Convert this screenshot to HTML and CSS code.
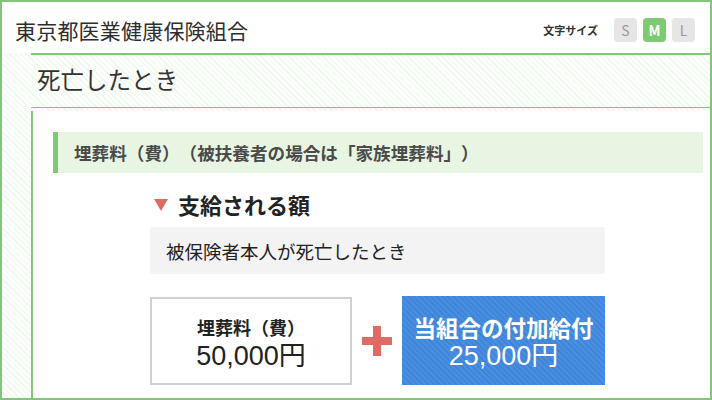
FILE: index.html
```html
<!DOCTYPE html>
<html lang="ja">
<head>
    <meta charset="UTF-8">
    <meta name="viewport" content="width=device-width, initial-scale=1.0">
    <title>死亡したとき</title>
    <link rel="stylesheet" href="styles.css">
</head>
<body>
    <div class="frame">
        <header class="site-header">
            <div class="site-title">東京都医業健康保険組合</div>
            <div class="font-size">
                <span class="font-size-label">文字サイズ</span>
                <span class="size-btn">S</span>
                <span class="size-btn active">M</span>
                <span class="size-btn">L</span>
            </div>
        </header>

        <div class="main">
            <h1 class="page-title">死亡したとき</h1>

            <div class="content">
                <h2 class="section-title">埋葬料（費）（被扶養者の場合は「家族埋葬料」）</h2>

                <div class="benefit">
                    <h3 class="benefit-title"><span class="tri"></span>支給される額</h3>
                    <div class="condition">被保険者本人が死亡したとき</div>

                    <div class="amounts">
                        <div class="amount-box">
                            <div class="amount-name">埋葬料（費）</div>
                            <div class="amount-value">50,000円</div>
                        </div>
                        <div class="plus"></div>
                        <div class="amount-box extra">
                            <div class="amount-name">当組合の付加給付</div>
                            <div class="amount-value">25,000円</div>
                        </div>
                    </div>
                </div>
            </div>
        </div>
    </div>
</body>
</html>
```

FILE: styles.css
```css
* {
    box-sizing: border-box;
}
body {
    margin: 0;
    padding: 0;
    font-family: "Noto Sans CJK JP", "Noto Sans", sans-serif;
    color: #333;
    background-color: #fff;
    text-spacing-trim: space-all;
}
.frame {
    width: 712px;
    height: 400px;
    border: 2px solid #80c77a;
    overflow: hidden;
    display: flex;
    flex-direction: column;
    background: repeating-linear-gradient(45deg, #eef7ec 0 1px, #fcfefb 1px 4px);
}

/* header */
.site-header {
    height: 51px;
    flex: none;
    background-color: #fff;
    display: flex;
    align-items: center;
    justify-content: space-between;
    padding: 5px 15px 0 13px;
}
.site-title {
    font-size: 21px;
    color: #2e2e2e;
    letter-spacing: 0.2px;
}
.font-size {
    display: flex;
    align-items: center;
    gap: 6px;
}
.font-size-label {
    font-size: 11px;
    font-weight: bold;
    color: #333;
    margin-right: 10px;
}
.size-btn {
    width: 23px;
    height: 24px;
    border-radius: 4px;
    background-color: #e6e6e6;
    color: #9a9a9a;
    font-size: 14px;
    line-height: 24px;
    text-align: center;
}
.size-btn.active {
    background-color: #7ccb72;
    color: #fff;
    font-weight: bold;
}

/* main column */
.main {
    flex: 1;
    margin-left: 29px;
    border-top: 2px solid #80c77a;
    display: flex;
    flex-direction: column;
}
.page-title {
    margin: 0;
    height: 53px;
    flex: none;
    display: flex;
    align-items: center;
    padding: 0 0 4px 6px;
    font-size: 23.5px;
    font-weight: normal;
    color: #333;
    border-bottom: 1px solid #80c77a;
}
.content {
    flex: 1;
    margin-top: 3px;
    border-left: 2px solid #80c77a;
    background-color: #fff;
    padding: 21px 7px 0 20px;
}
.section-title {
    margin: 0;
    height: 41px;
    display: flex;
    align-items: center;
    padding-left: 16px;
    border-left: 5px solid #7ccb72;
    background-color: #e8f5e3;
    font-size: 17.6px;
    font-weight: bold;
    color: #4a4a4a;
}

/* benefit */
.benefit {
    width: 455px;
    margin-left: 97px;
}
.benefit-title {
    margin: 16px 0 0;
    height: 30px;
    display: flex;
    align-items: center;
    font-size: 22px;
    font-weight: bold;
    color: #222;
}
.tri {
    width: 0;
    height: 0;
    margin: 2px 10px 0 4px;
    border-left: 7px solid transparent;
    border-right: 7px solid transparent;
    border-top: 12px solid #e06a64;
}
.condition {
    margin-top: 8px;
    height: 47px;
    display: flex;
    align-items: center;
    padding-left: 16px;
    background-color: #f3f3f3;
    border-radius: 3px;
    font-size: 18.5px;
    color: #222;
}
.amounts {
    margin-top: 22px;
    display: flex;
    align-items: center;
    justify-content: space-between;
}
.amount-box {
    width: 202px;
    height: 88px;
    border: 2px solid #d0d0d0;
    display: flex;
    flex-direction: column;
    align-items: center;
    justify-content: center;
    color: #222;
    padding-top: 2px;
}
.amount-name {
    font-size: 18px;
    font-weight: bold;
    line-height: 28px;
    text-spacing-trim: trim-start;
}
.amount-value {
    font-family: "Liberation Sans", "Noto Sans CJK JP", sans-serif;
    font-size: 27px;
    line-height: 30px;
}
.amount-box.extra {
    width: 203px;
    height: 89px;
    border: none;
    color: #fff;
    background: repeating-linear-gradient(45deg, #4a8ee0 0 2px, #3f85da 2px 4px);
}
.amount-box.extra .amount-name {
    font-size: 22.5px;
}
.plus {
    width: 30px;
    height: 30px;
    background:
        linear-gradient(#e06a64, #e06a64) center / 30px 8px no-repeat,
        linear-gradient(#e06a64, #e06a64) center / 8px 30px no-repeat;
}
```
